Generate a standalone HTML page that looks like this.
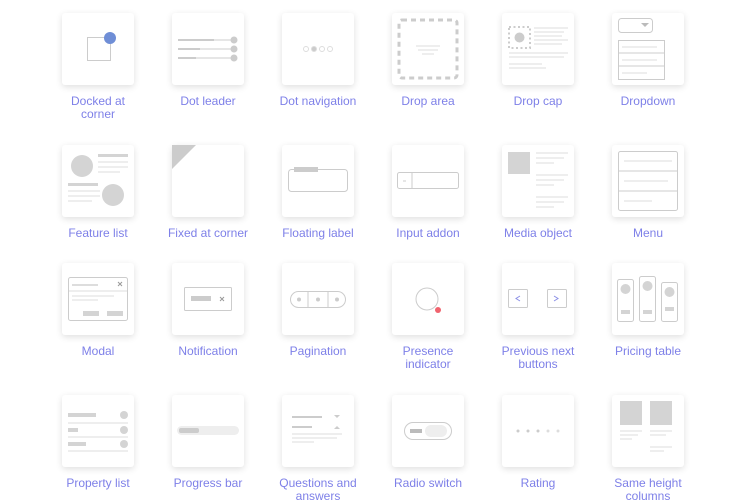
<!DOCTYPE html>
<html><head><meta charset="utf-8"><style>
html,body{margin:0;padding:0;background:#fff;width:750px;height:500px;overflow:hidden;font-family:"Liberation Sans",sans-serif}
.c{position:absolute;width:72px;height:72px;background:#fff;border-radius:3px;box-shadow:0 2px 7px rgba(0,0,0,0.13)}
.c svg{position:absolute;left:0;top:0}
.l{position:absolute;width:110px;text-align:center;color:#7e80e8;font-size:12px;line-height:13px}
</style></head><body>
<!-- Row 1 -->
<div class="c" style="left:62px;top:13px"><svg width="72" height="72"><rect x="25.5" y="24.5" width="23" height="23" fill="none" stroke="#ccc"/><circle cx="48" cy="25" r="6" fill="#6f8ed6"/></svg></div>
<div class="l" style="left:43px;top:95px">Docked at<br>corner</div>
<div class="c" style="left:172px;top:13px"><svg width="72" height="72" stroke="#ccc"><line x1="6" y1="27" x2="42" y2="27" stroke-width="2"/><line x1="42" y1="27" x2="60" y2="27"/><line x1="6" y1="36" x2="28" y2="36" stroke-width="2"/><line x1="28" y1="36" x2="60" y2="36"/><line x1="6" y1="45" x2="24" y2="45" stroke-width="2"/><line x1="24" y1="45" x2="60" y2="45"/><circle cx="62" cy="27" r="3" fill="#ccc"/><circle cx="62" cy="36" r="3" fill="#ccc"/><circle cx="62" cy="45" r="3" fill="#ccc"/></svg></div>
<div class="l" style="left:153px;top:95px">Dot leader</div>
<div class="c" style="left:282px;top:13px"><svg width="72" height="72" stroke="#ddd" fill="none"><circle cx="24" cy="36" r="2.5"/><circle cx="32" cy="36" r="2.5" fill="#ccc"/><circle cx="40" cy="36" r="2.5"/><circle cx="48" cy="36" r="2.5"/></svg></div>
<div class="l" style="left:263px;top:95px">Dot navigation</div>
<div class="c" style="left:392px;top:13px"><svg width="72" height="72"><rect x="7" y="7" width="58" height="58" rx="3" fill="none" stroke="#ccc" stroke-width="3" stroke-dasharray="5 4"/><line x1="24" y1="33" x2="48" y2="33" stroke="#ddd"/><line x1="26" y1="37" x2="46" y2="37" stroke="#ddd"/><line x1="30" y1="41" x2="42" y2="41" stroke="#ddd"/></svg></div>
<div class="l" style="left:373px;top:95px">Drop area</div>
<div class="c" style="left:502px;top:13px"><svg width="72" height="72" stroke="#ddd"><rect x="7" y="14" width="21" height="21" fill="none" stroke="#ccc" stroke-width="2" stroke-dasharray="2 2.5"/><circle cx="17.5" cy="24.5" r="5" fill="#ccc" stroke="none"/><line x1="32" y1="15" x2="66" y2="15"/><line x1="32" y1="19" x2="62" y2="19"/><line x1="32" y1="23" x2="60" y2="23"/><line x1="32" y1="27" x2="66" y2="27"/><line x1="32" y1="31" x2="60" y2="31"/><line x1="7" y1="40" x2="66" y2="40"/><line x1="7" y1="44" x2="62" y2="44"/><line x1="7" y1="51" x2="40" y2="51"/><line x1="7" y1="55" x2="44" y2="55"/></svg></div>
<div class="l" style="left:483px;top:95px">Drop cap</div>
<div class="c" style="left:612px;top:13px"><svg width="72" height="72" stroke="#ccc" fill="none"><rect x="6.5" y="5.5" width="34" height="14" rx="3"/><path d="M29 10h8l-4 4z" fill="#bbb" stroke="none"/><rect x="6.5" y="27.5" width="46" height="39"/><line x1="7" y1="40" x2="52" y2="40"/><line x1="7" y1="53" x2="52" y2="53"/><line x1="10" y1="34" x2="45" y2="34" stroke="#ddd"/><line x1="10" y1="47" x2="45" y2="47" stroke="#ddd"/><line x1="10" y1="60" x2="35" y2="60" stroke="#ddd"/></svg></div>
<div class="l" style="left:593px;top:95px">Dropdown</div>

<!-- Row 2 -->
<div class="c" style="left:62px;top:145px"><svg width="72" height="72" stroke="#ddd"><circle cx="20" cy="21" r="11" fill="#d4d4d4" stroke="none"/><rect x="36" y="9" width="30" height="3" fill="#d4d4d4" stroke="none"/><line x1="36" y1="17" x2="66" y2="17"/><line x1="36" y1="22" x2="66" y2="22"/><line x1="36" y1="27" x2="58" y2="27"/><rect x="6" y="38" width="30" height="3" fill="#d4d4d4" stroke="none"/><line x1="6" y1="46" x2="38" y2="46"/><line x1="6" y1="51" x2="38" y2="51"/><line x1="6" y1="56" x2="30" y2="56"/><circle cx="51" cy="50" r="11" fill="#d4d4d4" stroke="none"/></svg></div>
<div class="l" style="left:43px;top:227px">Feature list</div>
<div class="c" style="left:172px;top:145px"><svg width="72" height="72"><path d="M0 0H24L0 24Z" fill="#ccc"/></svg></div>
<div class="l" style="left:153px;top:227px">Fixed at corner</div>
<div class="c" style="left:282px;top:145px"><svg width="72" height="72"><rect x="6.5" y="24.5" width="59" height="22" rx="3" fill="none" stroke="#ccc"/><rect x="12" y="22" width="24" height="5" fill="#ccc"/></svg></div>
<div class="l" style="left:263px;top:227px">Floating label</div>
<div class="c" style="left:392px;top:145px"><svg width="72" height="72" stroke="#ccc" fill="none"><rect x="5.5" y="27.5" width="61" height="16" rx="2"/><line x1="20" y1="28" x2="20" y2="43"/><line x1="11" y1="36" x2="14" y2="36"/></svg></div>
<div class="l" style="left:373px;top:227px">Input addon</div>
<div class="c" style="left:502px;top:145px"><svg width="72" height="72" stroke="#ddd"><rect x="6" y="7" width="22" height="22" fill="#d4d4d4" stroke="none"/><line x1="34" y1="8" x2="66" y2="8"/><line x1="34" y1="13" x2="62" y2="13"/><line x1="34" y1="18" x2="52" y2="18"/><line x1="34" y1="30" x2="66" y2="30"/><line x1="34" y1="35" x2="62" y2="35"/><line x1="34" y1="40" x2="52" y2="40"/><line x1="34" y1="52" x2="66" y2="52"/><line x1="34" y1="57" x2="62" y2="57"/><line x1="34" y1="62" x2="52" y2="62"/></svg></div>
<div class="l" style="left:483px;top:227px">Media object</div>
<div class="c" style="left:612px;top:145px"><svg width="72" height="72" stroke="#ccc" fill="none"><rect x="6.5" y="6.5" width="59" height="59" rx="2"/><line x1="7" y1="26" x2="65" y2="26"/><line x1="7" y1="46" x2="65" y2="46"/><line x1="12" y1="16" x2="60" y2="16" stroke="#ddd"/><line x1="12" y1="36" x2="56" y2="36" stroke="#ddd"/><line x1="12" y1="56" x2="40" y2="56" stroke="#ddd"/></svg></div>
<div class="l" style="left:593px;top:227px">Menu</div>

<!-- Row 3 -->
<div class="c" style="left:62px;top:263px"><svg width="72" height="72" stroke="#ccc" fill="none"><rect x="6.5" y="14.5" width="59" height="43" rx="2"/><line x1="10" y1="22" x2="36" y2="22" stroke="#ddd" stroke-width="2"/><path d="M56 19l4 4M60 19l-4 4" stroke="#999"/><line x1="7" y1="28" x2="65" y2="28" stroke="#ddd"/><line x1="10" y1="33" x2="52" y2="33" stroke="#ddd"/><line x1="10" y1="37" x2="36" y2="37" stroke="#ddd"/><rect x="21" y="48" width="16" height="5" fill="#d4d4d4" stroke="none"/><rect x="45" y="48" width="16" height="5" fill="#d4d4d4" stroke="none"/></svg></div>
<div class="l" style="left:43px;top:345px">Modal</div>
<div class="c" style="left:172px;top:263px"><svg width="72" height="72" stroke="#ccc" fill="none"><rect x="12.5" y="24.5" width="47" height="23" rx="1"/><rect x="19" y="33" width="20" height="5" fill="#ccc" stroke="none"/><path d="M48 34l4 4M52 34l-4 4" stroke="#999"/></svg></div>
<div class="l" style="left:153px;top:345px">Notification</div>
<div class="c" style="left:282px;top:263px"><svg width="72" height="72" stroke="#ccc" fill="none"><rect x="8.5" y="28.5" width="55" height="16" rx="8"/><line x1="26" y1="29" x2="26" y2="44"/><line x1="46" y1="29" x2="46" y2="44"/><circle cx="17" cy="36.5" r="2" fill="#ccc" stroke="none"/><circle cx="36" cy="36.5" r="2" fill="#ccc" stroke="none"/><circle cx="55" cy="36.5" r="2" fill="#ccc" stroke="none"/></svg></div>
<div class="l" style="left:263px;top:345px">Pagination</div>
<div class="c" style="left:392px;top:263px"><svg width="72" height="72"><circle cx="35" cy="36" r="11" fill="none" stroke="#ccc"/><circle cx="46" cy="47" r="3" fill="#f0636e"/></svg></div>
<div class="l" style="left:373px;top:345px">Presence<br>indicator</div>
<div class="c" style="left:502px;top:263px"><svg width="72" height="72" stroke="#ccc" fill="none"><rect x="6.5" y="26.5" width="19" height="18" rx="1"/><rect x="45.5" y="26.5" width="19" height="18" rx="1"/><path d="M18 33l-4 2.5 4 2.5M52 33l4 2.5-4 2.5" stroke="#8a8ee6"/></svg></div>
<div class="l" style="left:483px;top:345px">Previous next<br>buttons</div>
<div class="c" style="left:612px;top:263px"><svg width="72" height="72" stroke="#ccc" fill="none"><rect x="5.5" y="16.5" width="16" height="42" rx="2"/><rect x="27.5" y="13.5" width="16" height="45" rx="2"/><rect x="49.5" y="19.5" width="16" height="39" rx="2"/><circle cx="13.5" cy="26" r="5" fill="#d4d4d4" stroke="none"/><circle cx="35.5" cy="23" r="5" fill="#d4d4d4" stroke="none"/><circle cx="57.5" cy="29" r="5" fill="#d4d4d4" stroke="none"/><rect x="9" y="47" width="9" height="4" fill="#d4d4d4" stroke="none"/><rect x="31" y="47" width="9" height="4" fill="#d4d4d4" stroke="none"/><rect x="53" y="44" width="9" height="4" fill="#d4d4d4" stroke="none"/></svg></div>
<div class="l" style="left:593px;top:345px">Pricing table</div>

<!-- Row 4 -->
<div class="c" style="left:62px;top:395px"><svg width="72" height="72" stroke="#ddd"><rect x="6" y="18" width="28" height="4" fill="#d4d4d4" stroke="none"/><circle cx="62" cy="20" r="4" fill="#d4d4d4" stroke="none"/><line x1="6" y1="28" x2="66" y2="28"/><rect x="6" y="33" width="10" height="4" fill="#d4d4d4" stroke="none"/><circle cx="62" cy="35" r="4" fill="#d4d4d4" stroke="none"/><line x1="6" y1="42" x2="66" y2="42"/><rect x="6" y="47" width="18" height="4" fill="#d4d4d4" stroke="none"/><circle cx="62" cy="49" r="4" fill="#d4d4d4" stroke="none"/><line x1="6" y1="56" x2="66" y2="56"/></svg></div>
<div class="l" style="left:43px;top:477px">Property list</div>
<div class="c" style="left:172px;top:395px"><svg width="72" height="72"><rect x="5" y="31" width="62" height="9" rx="4.5" fill="#eee"/><rect x="7" y="33" width="20" height="5" rx="2" fill="#ccc"/></svg></div>
<div class="l" style="left:153px;top:477px">Progress bar</div>
<div class="c" style="left:282px;top:395px"><svg width="72" height="72" stroke="#ddd"><line x1="10" y1="22" x2="40" y2="22" stroke="#ccc" stroke-width="2"/><path d="M52 20h6l-3 3z" fill="#ccc" stroke="none"/><line x1="10" y1="32" x2="30" y2="32" stroke="#ccc" stroke-width="2"/><path d="M52 34h6l-3-3z" fill="#ccc" stroke="none"/><line x1="10" y1="39" x2="60" y2="39"/><line x1="10" y1="43" x2="55" y2="43"/><line x1="10" y1="47" x2="32" y2="47"/></svg></div>
<div class="l" style="left:263px;top:477px">Questions and<br>answers</div>
<div class="c" style="left:392px;top:395px"><svg width="72" height="72"><rect x="12.5" y="27.5" width="47" height="17" rx="8.5" fill="none" stroke="#ccc"/><rect x="18" y="34" width="12" height="4" fill="#bbb"/><rect x="33" y="30" width="22" height="12" rx="6" fill="#eee"/></svg></div>
<div class="l" style="left:373px;top:477px">Radio switch</div>
<div class="c" style="left:502px;top:395px"><svg width="72" height="72" fill="#ccc"><circle cx="16" cy="36" r="1.5"/><circle cx="26" cy="36" r="1.5"/><circle cx="36" cy="36" r="1.5"/><circle cx="46" cy="36" r="1.5" fill="#ddd"/><circle cx="56" cy="36" r="1.5" fill="#ddd"/></svg></div>
<div class="l" style="left:483px;top:477px">Rating</div>
<div class="c" style="left:612px;top:395px"><svg width="72" height="72" stroke="#ddd"><rect x="8" y="6" width="22" height="24" fill="#d4d4d4" stroke="none"/><rect x="38" y="6" width="22" height="24" fill="#d4d4d4" stroke="none"/><line x1="8" y1="36" x2="30" y2="36"/><line x1="8" y1="40" x2="26" y2="40"/><line x1="8" y1="44" x2="20" y2="44"/><line x1="38" y1="36" x2="60" y2="36"/><line x1="38" y1="40" x2="54" y2="40"/><line x1="38" y1="52" x2="60" y2="52"/><line x1="38" y1="56" x2="52" y2="56"/></svg></div>
<div class="l" style="left:593px;top:477px">Same height<br>columns</div>
</body></html>
